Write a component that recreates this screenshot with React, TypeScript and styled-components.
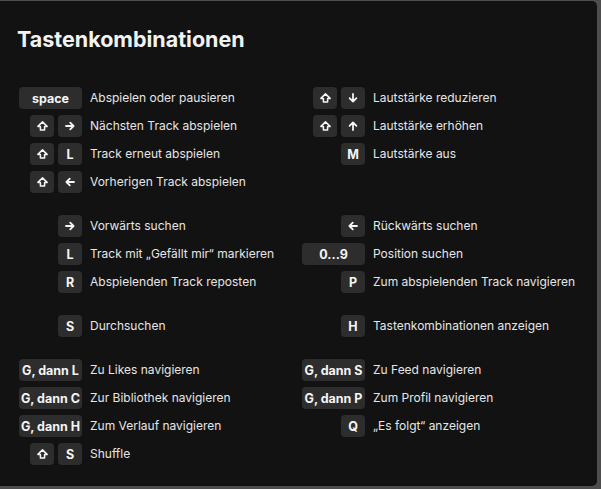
import React from "react";
import styled, { createGlobalStyle } from "styled-components";

const Global = createGlobalStyle`
  html, body { margin: 0; padding: 0; }
  body {
    background: #4d4d4d;
    font-family: Inter, "Noto Sans", sans-serif;
    -webkit-font-smoothing: antialiased;
  }
`;

const Modal = styled.div`
  box-sizing: border-box;
  width: 597px;
  height: 485px;
  margin-top: 1px;
  background: #121212;
  border-radius: 0 5px 5px 0;
  padding: 26px 17px 0 17px;
  color: #e8e8e8;
`;

const Title = styled.h1`
  margin: 0 0 36px 0;
  font-size: 21.5px;
  line-height: 24px;
  font-weight: 700;
  color: #f2f2f2;
`;

const Sections = styled.div`
  display: flex;
  flex-direction: column;
  gap: 22px;
  padding-left: 2px;
`;

const Section = styled.div`
  display: grid;
  grid-template-columns: 283px 283px;
  row-gap: 6px;
`;

const Item = styled.div`
  display: flex;
  align-items: center;
  gap: 8px;
  height: 22px;
`;

const Keys = styled.div`
  width: 63px;
  flex: none;
  display: flex;
  justify-content: flex-end;
  gap: 4px;
`;

const Key = styled.span<{ $wide?: boolean }>`
  box-sizing: border-box;
  height: 22px;
  min-width: 24px;
  width: ${(p) => (p.$wide ? "100%" : "24px")};
  display: inline-flex;
  align-items: center;
  justify-content: center;
  background: #2d2d2d;
  border-radius: 4px;
  color: #f5f5f5;
  font-size: 12.5px;
  font-weight: 700;
  white-space: nowrap;
`;

const Label = styled.span`
  font-size: 12px;
  line-height: 16px;
  color: #e6e6e6;
  white-space: nowrap;
`;

const Shift = () => (
  <svg width="11" height="10" viewBox="0 0 11 10" fill="none">
    <path
      d="M5.5 0.9 L10.1 5.4 H7.6 V9.1 H3.4 V5.4 H0.9 Z"
      stroke="#f5f5f5"
      strokeWidth="1.5"
      strokeLinejoin="round"
    />
  </svg>
);

const Arrow = ({ dir }: { dir: "left" | "right" | "up" | "down" }) => {
  const rot = { right: 0, down: 90, left: 180, up: 270 }[dir];
  return (
    <svg width="10" height="10" viewBox="0 0 10 10" fill="none" style={{ transform: `rotate(${rot}deg)` }}>
      <path
        d="M1 5 H8.6 M5.2 1.6 L8.6 5 L5.2 8.4"
        stroke="#f5f5f5"
        strokeWidth="1.8"
        strokeLinecap="round"
        strokeLinejoin="round"
      />
    </svg>
  );
};

type K = { k: React.ReactNode; wide?: boolean };
type Entry = { keys: K[]; label: string } | null;

const shift: K = { k: <Shift /> };
const arrow = (d: "left" | "right" | "up" | "down"): K => ({ k: <Arrow dir={d} /> });
const t = (s: string): K => ({ k: s });
const w = (s: string): K => ({ k: s, wide: true });

const sections: [Entry, Entry][][] = [
  [
    [
      { keys: [w("space")], label: "Abspielen oder pausieren" },
      { keys: [shift, arrow("down")], label: "Lautstärke reduzieren" },
    ],
    [
      { keys: [shift, arrow("right")], label: "Nächsten Track abspielen" },
      { keys: [shift, arrow("up")], label: "Lautstärke erhöhen" },
    ],
    [
      { keys: [shift, t("L")], label: "Track erneut abspielen" },
      { keys: [t("M")], label: "Lautstärke aus" },
    ],
    [{ keys: [shift, arrow("left")], label: "Vorherigen Track abspielen" }, null],
  ],
  [
    [
      { keys: [arrow("right")], label: "Vorwärts suchen" },
      { keys: [arrow("left")], label: "Rückwärts suchen" },
    ],
    [
      { keys: [t("L")], label: "Track mit „Gefällt mir“ markieren" },
      { keys: [w("0...9")], label: "Position suchen" },
    ],
    [
      { keys: [t("R")], label: "Abspielenden Track reposten" },
      { keys: [t("P")], label: "Zum abspielenden Track navigieren" },
    ],
  ],
  [
    [
      { keys: [t("S")], label: "Durchsuchen" },
      { keys: [t("H")], label: "Tastenkombinationen anzeigen" },
    ],
  ],
  [
    [
      { keys: [w("G, dann L")], label: "Zu Likes navigieren" },
      { keys: [w("G, dann S")], label: "Zu Feed navigieren" },
    ],
    [
      { keys: [w("G, dann C")], label: "Zur Bibliothek navigieren" },
      { keys: [w("G, dann P")], label: "Zum Profil navigieren" },
    ],
    [
      { keys: [w("G, dann H")], label: "Zum Verlauf navigieren" },
      { keys: [t("Q")], label: "„Es folgt“ anzeigen" },
    ],
    [{ keys: [shift, t("S")], label: "Shuffle" }, null],
  ],
];

const Cell = ({ e }: { e: Entry }) =>
  e ? (
    <Item>
      <Keys>
        {e.keys.map((k, i) => (
          <Key key={i} $wide={k.wide}>
            {k.k}
          </Key>
        ))}
      </Keys>
      <Label>{e.label}</Label>
    </Item>
  ) : (
    <Item />
  );

export default function App() {
  return (
    <>
      <Global />
      <Modal>
        <Title>Tastenkombinationen</Title>
        <Sections>
          {sections.map((rows, si) => (
            <Section key={si}>
              {rows.map((pair, ri) => (
                <React.Fragment key={ri}>
                  <Cell e={pair[0]} />
                  <Cell e={pair[1]} />
                </React.Fragment>
              ))}
            </Section>
          ))}
        </Sections>
      </Modal>
    </>
  );
}
